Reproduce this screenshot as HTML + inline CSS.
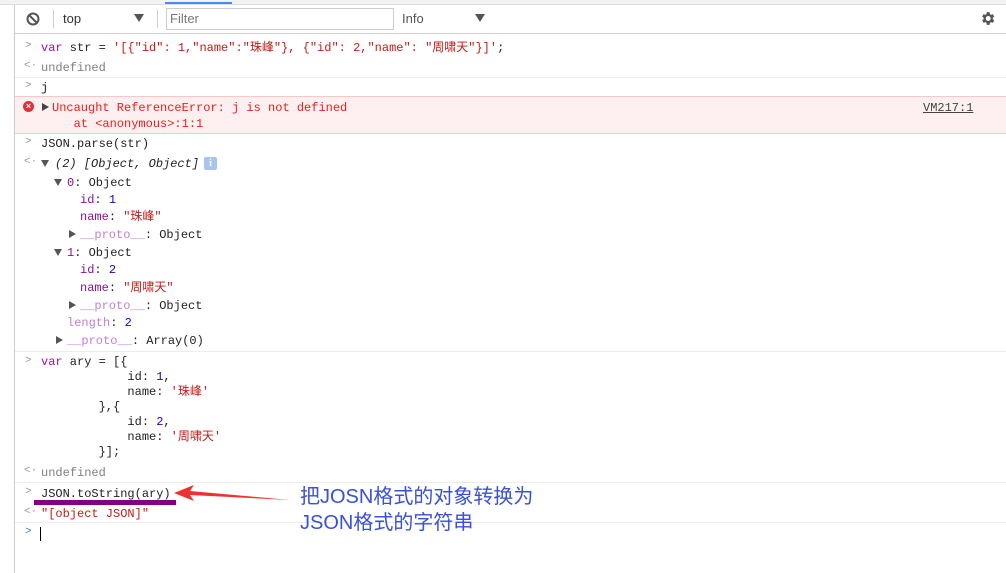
<!DOCTYPE html>
<html><head><meta charset="utf-8"><style>
body{margin:0;width:1006px;height:573px;background:#fff;position:relative;overflow:hidden;font-family:"Liberation Mono","Noto Sans CJK SC",monospace;font-size:12px;color:#222}
.a{position:absolute;white-space:pre;line-height:16px}
.hl{position:absolute;left:15px;right:0;height:1px;background:#ececec}
.p{color:#aa0d91}.s{color:#c41a16}.n{color:#1c00cf}.g{color:#808080}.k{color:#881391}.lk{color:#c080d0}
.pr{position:absolute;color:#999;font-size:11px}
.tri{position:absolute;width:0;height:0}
</style></head><body>
<div style="position:absolute;left:0;top:0;right:0;height:4px;background:#f3f3f3;border-bottom:1px solid #ddd"></div>
<div style="position:absolute;left:165px;top:2px;width:67px;height:2px;background:#4a8af4"></div>
<div style="position:absolute;left:0;top:5px;width:14px;bottom:0;background:#fff;border-right:1px solid #ccc"></div>
<div style="position:absolute;left:15px;top:5px;right:0;height:28px;background:#fff;border-bottom:1px solid #d0d0d0"></div>
<svg style="position:absolute;left:26px;top:12px" width="14" height="14"><circle cx="7" cy="7" r="5.5" fill="none" stroke="#555" stroke-width="2"/><line x1="3" y1="3" x2="11" y2="11" stroke="#555" stroke-width="2"/></svg>
<div style="position:absolute;left:53px;top:10px;width:1px;height:18px;background:#ccc"></div>
<div class="a" style="left:63px;top:11px;font-family:'Liberation Sans',sans-serif;font-size:13px;color:#333">top</div>
<div class="tri" style="left:134px;top:14px;border-left:5px solid transparent;border-right:5px solid transparent;border-top:8px solid #555"></div>
<div style="position:absolute;left:157px;top:10px;width:1px;height:18px;background:#ccc"></div>
<div style="position:absolute;left:166px;top:8px;width:226px;height:20px;border:1px solid #ccc"></div>
<div class="a" style="left:170px;top:11px;font-family:'Liberation Sans',sans-serif;font-size:13px;color:#777">Filter</div>
<div class="a" style="left:402px;top:11px;font-family:'Liberation Sans',sans-serif;font-size:13px;color:#555">Info</div>
<div class="tri" style="left:475px;top:14px;border-left:5px solid transparent;border-right:5px solid transparent;border-top:8px solid #555"></div>
<svg style="position:absolute;left:979px;top:10px" width="17" height="17" viewBox="0 0 24 24"><path fill="#555" d="M19.4 13a7.5 7.5 0 000-2l2.1-1.6-2-3.5-2.5 1a7.4 7.4 0 00-1.7-1L15 3h-4l-.4 2.9a7.4 7.4 0 00-1.7 1l-2.5-1-2 3.5L6.6 11a7.5 7.5 0 000 2l-2.1 1.6 2 3.5 2.5-1a7.4 7.4 0 001.7 1L11 21h4l.4-2.900a7.4 7.4 0 001.7-1l2.5 1 2-3.5zM13 15.5a3.5 3.5 0 110-7 3.5 3.5 0 010 7z"/></svg>

<div class="pr" style="left:25px;top:40px">&gt;</div>
<div class="a" style="left:41px;top:40px"><span class="p">var</span> str = <span class="s">'[{"id": 1,"name":"珠峰"}, {"id": 2,"name": "周啸天"}]'</span>;</div>
<div class="pr" style="left:24px;top:60px">&lt;·</div>
<div class="a g" style="left:41px;top:60px">undefined</div>
<div class="hl" style="top:77px"></div>
<div class="pr" style="left:25px;top:80px">&gt;</div>
<div class="a" style="left:41px;top:80px">j</div>
<div style="position:absolute;left:15px;right:0;top:96px;height:36px;background:#fef0f0;border-top:1px solid #f7c8c8;border-bottom:1px solid #f7c8c8"></div>
<div style="position:absolute;left:23px;top:101px;width:11px;height:11px;border-radius:50%;background:#e0303a;color:#fff;font:bold 9px/11px 'Liberation Sans',sans-serif;text-align:center">×</div>
<div class="tri" style="left:42px;top:103px;border-top:4px solid transparent;border-bottom:4px solid transparent;border-left:7px solid #444"></div>
<div class="a" style="left:52px;top:100px;color:#ee1c1c">Uncaught ReferenceError: j is not defined
   at &lt;anonymous&gt;:1:1</div>
<div class="a" style="left:923px;top:100px;color:#444;text-decoration:underline">VM217:1</div>
<div class="pr" style="left:25px;top:136px">&gt;</div>
<div class="a" style="left:41px;top:136px">JSON.parse(str)</div>
<div class="pr" style="left:24px;top:156px">&lt;·</div>
<div class="tri" style="left:41px;top:160px;border-left:4px solid transparent;border-right:4px solid transparent;border-top:7px solid #555"></div>
<div class="a" style="left:55px;top:156px;font-style:italic">(2) [Object, Object]</div>
<div style="position:absolute;left:204px;top:157px;width:13px;height:13px;border-radius:2px;background:#a8c4f0;color:#fff;font:bold 10px/13px 'Liberation Serif',serif;text-align:center">i</div>
<div class="tri" style="left:54px;top:179px;border-left:4px solid transparent;border-right:4px solid transparent;border-top:7px solid #555"></div>
<div class="a" style="left:67px;top:175px"><span class="k">0</span>: Object</div>
<div class="a" style="left:80px;top:192px"><span class="k">id</span>: <span class="n">1</span></div>
<div class="a" style="left:80px;top:209px"><span class="k">name</span>: <span class="s">"珠峰"</span></div>
<div class="tri" style="left:69px;top:230px;border-top:4px solid transparent;border-bottom:4px solid transparent;border-left:7px solid #555"></div>
<div class="a" style="left:80px;top:227px"><span class="lk">__proto__</span>: Object</div>
<div class="tri" style="left:54px;top:249px;border-left:4px solid transparent;border-right:4px solid transparent;border-top:7px solid #555"></div>
<div class="a" style="left:67px;top:245px"><span class="k">1</span>: Object</div>
<div class="a" style="left:80px;top:262px"><span class="k">id</span>: <span class="n">2</span></div>
<div class="a" style="left:80px;top:280px"><span class="k">name</span>: <span class="s">"周啸天"</span></div>
<div class="tri" style="left:69px;top:301px;border-top:4px solid transparent;border-bottom:4px solid transparent;border-left:7px solid #555"></div>
<div class="a" style="left:80px;top:298px"><span class="lk">__proto__</span>: Object</div>
<div class="a" style="left:67px;top:315px"><span class="lk">length</span>: <span class="n">2</span></div>
<div class="tri" style="left:56px;top:336px;border-top:4px solid transparent;border-bottom:4px solid transparent;border-left:7px solid #555"></div>
<div class="a" style="left:67px;top:333px"><span class="lk">__proto__</span>: Array(0)</div>
<div class="hl" style="top:351px"></div>
<div class="pr" style="left:25px;top:355px">&gt;</div>
<div class="a" style="left:41px;top:355px;line-height:15px"><span class="p">var</span> ary = [{
            id: <span class="n">1</span>,
            name: <span class="s">'珠峰'</span>
        },{
            id: <span class="n">2</span>,
            name: <span class="s">'周啸天'</span>
        }];</div>
<div class="pr" style="left:24px;top:465px">&lt;·</div>
<div class="a g" style="left:41px;top:465px">undefined</div>
<div class="hl" style="top:482px"></div>
<div class="pr" style="left:25px;top:486px">&gt;</div>
<div class="a" style="left:41px;top:486px">JSON.toString(ary)</div>
<div style="position:absolute;left:34px;top:500px;width:142px;height:5px;background:#800080"></div>
<svg style="position:absolute;left:172px;top:484px" width="120" height="20"><polygon points="2,9 22,1 18,7 118,16 18,11 22,17" fill="#ee3030"/></svg>
<div class="pr" style="left:24px;top:506px">&lt;·</div>
<div class="a" style="left:41px;top:506px"><span class="s">"[object JSON]"</span></div>
<div class="hl" style="top:522px"></div>
<div class="pr" style="left:25px;top:526px;color:#3a7ef0">&gt;</div>
<div style="position:absolute;left:40px;top:527px;width:1px;height:14px;background:#000"></div>
<div class="a" style="left:300px;top:484px;font-family:'Liberation Sans','Noto Sans CJK SC',sans-serif;font-size:20px;line-height:26px;color:#3a50d8">把JOSN格式的对象转换为
JSON格式的字符串</div>
</body></html>
